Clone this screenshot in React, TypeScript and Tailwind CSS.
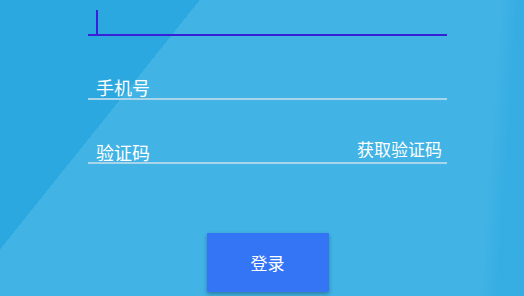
import React from "react"

const font = { fontFamily: '"Noto Sans CJK SC", "Noto Sans", sans-serif' }

export default function App() {
  return (
    <div
      className="w-[524px] h-[296px] overflow-hidden bg-[linear-gradient(93.9deg,transparent_500px,rgba(30,160,220,0.3)_516px),linear-gradient(128.7deg,#2ba8e0_156px,#41b3e5_156px)]"
      style={font}
    >
      <div className="ml-[88px] w-[359px] flex flex-col">
        {/* focused input (scrolled off the top) */}
        <div className="h-[36px] border-b-2 border-[#3a1fd8] flex items-end pl-[8px]">
          <div className="w-[2px] h-[24px] bg-[#3a1fd8]" />
        </div>

        {/* phone number */}
        <div className="mt-[41px] border-b-2 border-[#a9d5ea] pl-[8px] pb-[1px]">
          <span className="block text-[18px] leading-[20px] text-white">手机号</span>
        </div>

        {/* verification code */}
        <div className="mt-[40px] border-b-2 border-[#a9d5ea] pl-[8px] pr-[5px] flex justify-between items-start">
          <span className="block pt-[2px] text-[18px] leading-[20px] text-white">验证码</span>
          <span className="block text-[17px] leading-[18px] text-white">获取验证码</span>
        </div>

        <div className="mt-[69px] flex justify-center">
          <button className="w-[122px] h-[59px] bg-[#3475f6] text-white text-[17px] leading-none shadow-[0_2px_4px_rgba(0,0,0,0.3)]">
            登录
          </button>
        </div>
      </div>
    </div>
  )
}
